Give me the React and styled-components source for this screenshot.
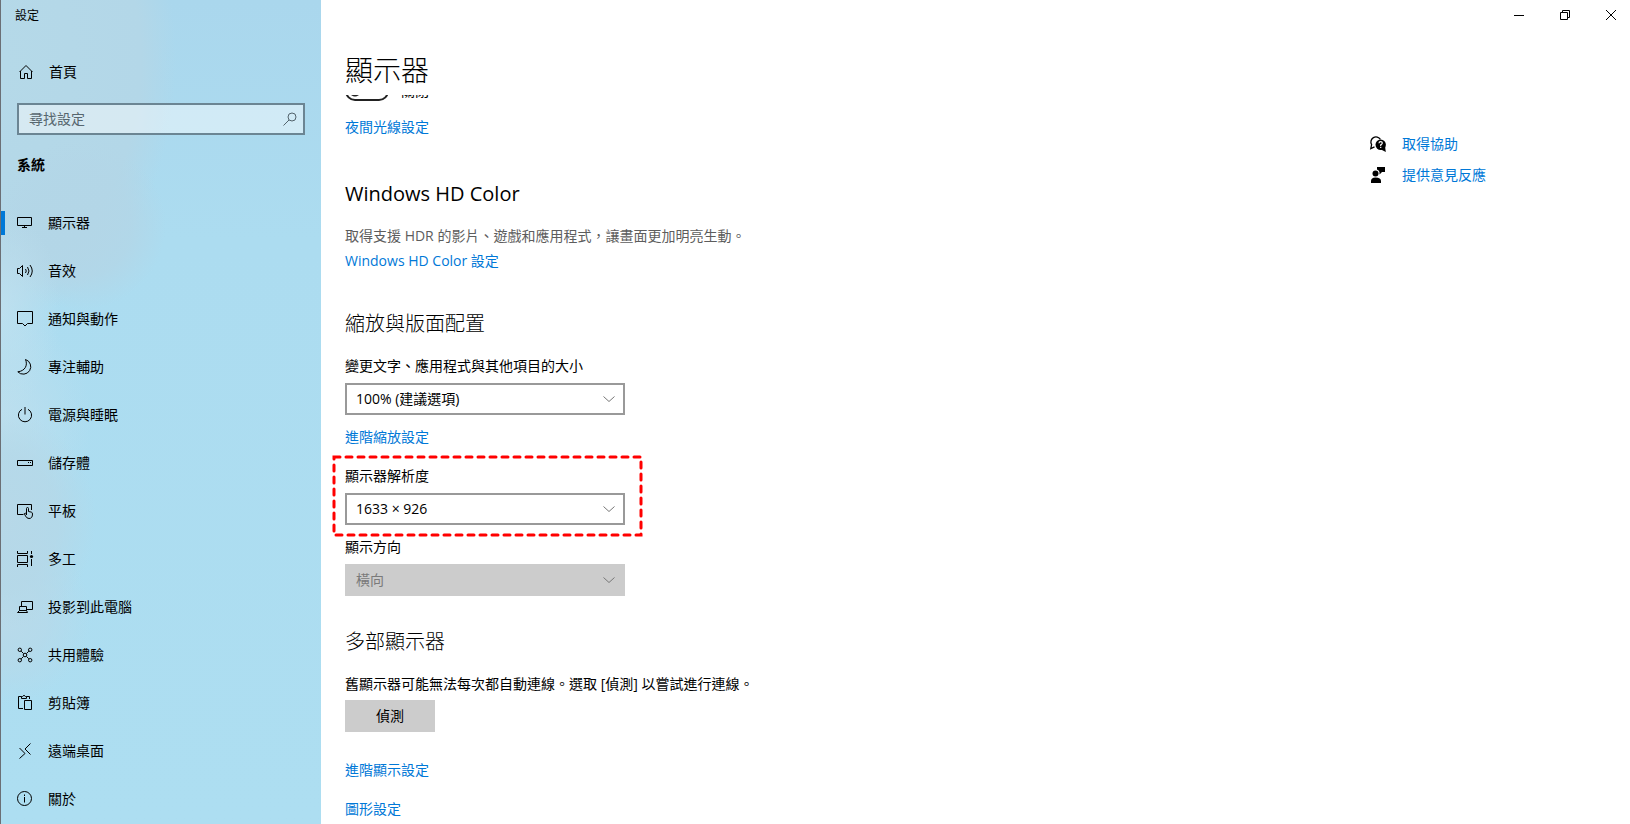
import React from "react";
import styled, { createGlobalStyle } from "styled-components";

const navList = [
  { id: "display", name: "顯示器" },
  { id: "sound", name: "音效" },
  { id: "notice", name: "通知與動作" },
  { id: "focus", name: "專注輔助" },
  { id: "power", name: "電源與睡眠" },
  { id: "storage", name: "儲存體" },
  { id: "tablet", name: "平板" },
  { id: "multitask", name: "多工" },
  { id: "project", name: "投影到此電腦" },
  { id: "share", name: "共用體驗" },
  { id: "clipboard", name: "剪貼簿" },
  { id: "remote", name: "遠端桌面" },
  { id: "about", name: "關於" },
];

const shapes = {
  home: (
    <path d="M1.5 8 L8 1.5 L14.5 8 M2.5 7 V14.5 H6.5 V9.5 H9.5 V14.5 H13.5 V7" />
  ),
  display: <path d="M.5 2.5 H14.5 V10.5 H.5 Z M7.5 10.5 V12.5 M5 12.5 H10" />,
  sound: (
    <path d="M.5 5.5 H2.5 L5.5 2.5 V13.5 L2.5 10.5 H.5 Z M8.5 6 Q10 8 8.5 10 M10.5 4 Q13.5 8 10.5 12 M13 2 Q17.5 8 13 14" />
  ),
  notice: <path d="M.5 .5 H15.5 V12.5 H10.5 L8 15 L5.5 12.5 H.5 Z" />,
  focus: (
    <path d="M8.5 .5 A7.5 7.5 0 1 1 .8 12.8 C8 12 11 6.5 8.5 .5 Z" />
  ),
  power: <path d="M8 0 V7.5 M5 2.3 A6.6 6.6 0 1 0 11 2.3" />,
  storage: <path d="M.5 5.5 H15.5 V10.5 H.5 Z M11 7.5 H12 M13 7.5 H14" />,
  tablet: (
    <path d="M6.5 11.5 H.5 V1.5 H14.5 V7 M9.5 12 V5.5 A1 1 0 0 1 11.5 5.5 V8.5 L14.3 9.1 Q15.5 9.4 15.5 11 Q15.5 15.5 12 15.5 Q9.8 15.5 8.5 13 L7.3 10.6 Q8.3 9.6 9.5 11" />
  ),
  multitask: (
    <g>
      <path d="M.5 0 V2.5 H10.5 V0 M.5 4.5 H10.5 V11.5 H.5 Z M.5 16 V13.5 H10.5 V16 M14.5 0 V3 M14.5 8 V15" />
      <circle cx="14.5" cy="5.5" r="1.6" fill="currentColor" stroke="none" />
    </g>
  ),
  project: (
    <path d="M4.5 7 V2.5 H15.5 V10.5 H10 M2.5 7.5 H9.5 V11.5 H2.5 Z M.5 13.5 H10.5 L9.5 11.5 H2.5 Z" />
  ),
  share: (
    <g>
      <path d="M4.2 4.2 L6.5 6.5 M11.8 4.2 L9.5 6.5 M4.2 11.8 L6.5 9.5 M11.8 11.8 L9.5 9.5" />
      <circle cx="8" cy="8" r="1.8" />
      <circle cx="2.8" cy="2.8" r="1.7" />
      <circle cx="13.2" cy="2.8" r="1.7" />
      <circle cx="2.8" cy="13.2" r="1.7" />
      <circle cx="13.2" cy="13.2" r="1.7" />
    </g>
  ),
  clipboard: (
    <path d="M6 13.5 H1.5 V1.5 H4.5 M9.5 1.5 H12.5 V4 M4.5 3.5 V1.5 H5.5 Q7 -1 8.5 1.5 H9.5 V3.5 Z M7.5 5.5 H14.5 V14.5 H7.5 Z" />
  ),
  remote: <path d="M13.5 .5 L8 6 L13.5 11.5 M2.5 5 L8 10.5 L2.5 15.5" />,
  about: (
    <g>
      <circle cx="7.5" cy="7.5" r="7" />
      <path d="M7.5 6 V11.5 M7.5 3.5 V5" />
    </g>
  ),
  search: (
    <g>
      <circle cx="10" cy="6" r="4" />
      <path d="M7 9 L1.5 14.5" />
    </g>
  ),
};

const Icon = ({ name }) => (
  <IconSvg viewBox="0 0 16 16" aria-hidden="true">
    {shapes[name]}
  </IconSvg>
);

const HelpIcon = () => (
  <SolidSvg viewBox="0 0 16 16" aria-hidden="true">
    <path
      d="M4.5 10.8 L.8 12.5 L1.6 8.6 A5 5 0 1 1 10.4 3.4"
      fill="none"
      stroke="currentColor"
      strokeWidth="1.3"
    />
    <circle cx="10.7" cy="8.7" r="5.2" />
    <path d="M11 13.5 L15.8 16 L15 10 Z" />
    <path
      d="M9 7.3 Q9 5.7 10.7 5.7 Q12.3 5.7 12.3 7.1 Q12.3 8.1 10.7 8.9 V9.9 M10.7 10.8 V12"
      fill="none"
      stroke="#fff"
      strokeWidth="1.2"
    />
  </SolidSvg>
);

const FeedbackIcon = () => (
  <SolidSvg viewBox="0 0 16 16" aria-hidden="true">
    <circle cx="5.5" cy="6.5" r="3" />
    <path d="M1 16 V14 Q1 10.5 5.5 10.5 Q11 10.5 11 14 V16 Z" />
    <path d="M7 0 H15 V5 H12 L9.5 7.5 V5 Q9 3 7 2.5 Z" />
  </SolidSvg>
);

const SelectBox = ({ id, label, value, disabled }) => {
  return (
    <React.Fragment>
      <Label htmlFor={id}>{label}</Label>
      <SelectWrap>
        <Select id={id} defaultValue={value} disabled={disabled}>
          <option value={value}>{value}</option>
        </Select>
        <Arrow viewBox="0 0 12 6" aria-hidden="true">
          <path d="M.5 .5 L6 5.5 L11.5 .5" />
        </Arrow>
      </SelectWrap>
    </React.Fragment>
  );
};

const App = () => {
  const [current, setCurrent] = React.useState("display");

  return (
    <React.Fragment>
      <GlobalStyle />
      <Window>
        <Sidebar>
          <AppName>設定</AppName>
          <Home href="#home">
            <Icon name="home" />
            首頁
          </Home>
          <SearchBox>
            <SearchInput aria-label="尋找設定" placeholder="尋找設定" />
            <Icon name="search" />
          </SearchBox>
          <Category>系統</Category>
          <nav>
            {navList.map((v) => {
              return (
                <NavItem
                  key={v.id}
                  href={"#" + v.id}
                  $active={v.id === current}
                  onClick={() => setCurrent(v.id)}
                >
                  <Icon name={v.id} />
                  {v.name}
                </NavItem>
              );
            })}
          </nav>
        </Sidebar>

        <Main>
          <Controls>
            <ControlButton aria-label="最小化">
              <ControlSvg viewBox="0 0 10 10">
                <path d="M0 5.5 H10" />
              </ControlSvg>
            </ControlButton>
            <ControlButton aria-label="還原">
              <ControlSvg viewBox="0 0 10 10">
                <path d="M.5 2.5 H7.5 V9.5 H.5 Z M2.5 2.5 V.5 H9.5 V7.5 H7.5" />
              </ControlSvg>
            </ControlButton>
            <ControlButton aria-label="關閉視窗">
              <ControlSvg viewBox="0 0 10 10">
                <path d="M0 0 L10 10 M10 0 L0 10" />
              </ControlSvg>
            </ControlButton>
          </Controls>
          <Title>顯示器</Title>
          <Body>
            <Content>
              <Section $gap={43}>
                <ToggleRow>
                  <Toggle type="checkbox" role="switch" />
                  關閉
                </ToggleRow>
                <Link href="#night">夜間光線設定</Link>
              </Section>

              <Section $gap={39}>
                <SubTitle>Windows HD Color</SubTitle>
                <Text $sub>
                  取得支援 HDR 的影片、遊戲和應用程式，讓畫面更加明亮生動。
                </Text>
                <Link href="#hdcolor">Windows HD Color 設定</Link>
              </Section>

              <Section $gap={32}>
                <SubTitle $light>縮放與版面配置</SubTitle>
                <Field>
                  <SelectBox
                    id="scale"
                    label="變更文字、應用程式與其他項目的大小"
                    value="100% (建議選項)"
                  />
                </Field>
                <LinkRow>
                  <Link href="#scaling">進階縮放設定</Link>
                </LinkRow>
                <Field>
                  <SelectBox
                    id="resolution"
                    label="顯示器解析度"
                    value="1633 × 926"
                  />
                  <Marker aria-hidden="true">
                    <rect x="1" y="1" width="100%" height="100%" />
                  </Marker>
                </Field>
                <Field>
                  <SelectBox
                    id="direction"
                    label="顯示方向"
                    value="橫向"
                    disabled
                  />
                </Field>
              </Section>

              <Section $gap={0}>
                <SubTitle $light>多部顯示器</SubTitle>
                <Text>
                  舊顯示器可能無法每次都自動連線。選取 [偵測] 以嘗試進行連線。
                </Text>
                <DetectButton>偵測</DetectButton>
                <LinkList>
                  <Link href="#advanced">進階顯示設定</Link>
                  <Link href="#graphics">圖形設定</Link>
                </LinkList>
              </Section>
            </Content>
            <Aside>
              <HelpLink href="#help">
                <HelpIcon />
                取得協助
              </HelpLink>
              <HelpLink href="#feedback">
                <FeedbackIcon />
                提供意見反應
              </HelpLink>
            </Aside>
          </Body>
        </Main>
      </Window>
    </React.Fragment>
  );
};

const GlobalStyle = createGlobalStyle`
  * {
    box-sizing: border-box;
  }
  body {
    margin: 0;
    overflow: hidden;
    background: #fff;
  }
  body, button, input, select {
    font-family: "Open Sans", "Noto Sans CJK TC", sans-serif;
    font-size: 14px;
    line-height: 20px;
    color: #000;
  }
`;

const Window = styled.div`
  display: grid;
  grid-template-columns: 321px minmax(0, 1fr);
  height: 100vh;
`;

const Sidebar = styled.aside`
  overflow: hidden;
  border-left: 1px solid #6b6f75;
  background:
    radial-gradient(ellipse 60px 100px at 0 310px, rgba(193, 225, 239, 0.8) 0, rgba(193, 225, 239, 0) 100%),
    radial-gradient(circle 85px at 80px 225px, #b3d6e7 0, rgba(179, 214, 231, 0.8) 60%, rgba(179, 214, 231, 0) 100%),
    radial-gradient(ellipse 175px 260px at 0 60px, #b5d9e8 0, #b3d7e8 80%, rgba(176, 216, 234, 0) 100%),
    radial-gradient(ellipse 95px 110px at 0 520px, #b7d8e8 0, rgba(181, 216, 232, 0.8) 60%, rgba(181, 218, 235, 0) 100%),
    radial-gradient(ellipse 90px 110px at 0 420px, #bddfee 0, rgba(188, 221, 237, 0) 100%),
    radial-gradient(circle 90px at 0 615px, #b9daea 0, rgba(184, 217, 233, 0.7) 50%, rgba(181, 218, 235, 0) 100%),
    linear-gradient(#aad7ed 0, #acdcf0 240px, #addef1 100%);
`;

const AppName = styled.div`
  padding: 6px 14px 0;
  font-size: 12px;
`;

const Home = styled.a`
  display: flex;
  align-items: center;
  gap: 15px;
  height: 48px;
  margin-top: 22px;
  padding: 0 17px;
  color: #000;
  text-decoration: none;
`;

const IconSvg = styled.svg`
  flex: none;
  width: 16px;
  height: 16px;
  overflow: visible;
  fill: none;
  stroke: currentColor;
`;

const SearchBox = styled.div`
  display: flex;
  align-items: center;
  height: 32px;
  margin: 7px 16px 0;
  padding: 0 5px 0 10px;
  border: 2px solid #6b8593;
  background: rgba(255, 255, 255, 0.45);
  color: #53636c;
`;

const SearchInput = styled.input`
  flex: 1;
  min-width: 0;
  padding: 0;
  border: 0;
  outline: 0;
  background: transparent;

  &::placeholder {
    color: #56666f;
    opacity: 1;
  }
`;

const Category = styled.div`
  margin: 20px 16px 24px;
  font-weight: 700;
`;

const NavItem = styled.a`
  display: flex;
  align-items: center;
  gap: 15px;
  height: 48px;
  padding-right: 16px;
  color: #000;
  text-decoration: none;

  &::before {
    content: "";
    width: 4px;
    height: 24px;
    margin-right: -3px;
    background: ${(props) => (props.$active ? "#0078d7" : "transparent")};
  }
`;

const Main = styled.main`
  display: flex;
  flex-direction: column;
  min-width: 0;
  min-height: 0;
  background: #fff;
`;

const Controls = styled.div`
  display: flex;
  justify-content: flex-end;
  gap: 8px;
`;

const ControlButton = styled.button`
  display: flex;
  align-items: center;
  justify-content: center;
  width: 38px;
  height: 30px;
  padding: 0;
  border: 0;
  background: transparent;
`;

const ControlSvg = styled.svg`
  width: 10px;
  height: 10px;
  fill: none;
  stroke: #000;
`;

const Title = styled.h1`
  margin: 20px 24px 5px;
  font-size: 28px;
  font-weight: 300;
  line-height: 40px;
`;

const Body = styled.div`
  display: grid;
  grid-template-columns: minmax(0, 1fr) 260px;
  flex: 1;
  min-height: 0;
  overflow: hidden;
`;

/* the list is scrolled a little, so the switch is half under the title */
const Content = styled.div`
  margin-top: -14px;
  padding-left: 24px;
`;

const Section = styled.section`
  display: flex;
  flex-direction: column;
  align-items: flex-start;
  margin-bottom: ${(props) => props.$gap}px;
`;

const ToggleRow = styled.label`
  display: flex;
  align-items: center;
  gap: 12px;
  margin-bottom: 16px;
`;

const Toggle = styled.input`
  appearance: none;
  width: 44px;
  height: 20px;
  margin: 0;
  border: 2px solid #222;
  border-radius: 10px;
  background: radial-gradient(circle at 8px 8px, #222 5px, transparent 6px);
`;

const Link = styled.a`
  color: #0078d7;
  text-decoration: none;
`;

const SubTitle = styled.h2`
  margin: 0 0 18px;
  font-size: 20px;
  font-weight: ${(props) => (props.$light ? 300 : 400)};
  line-height: 28px;
`;

const Text = styled.p`
  margin: 0 0 5px;
  color: ${(props) => (props.$sub ? "#5d5d5d" : "#000")};
`;

const Field = styled.div`
  position: relative;
  width: 280px;

  & + & {
    margin-top: 12px;
  }
`;

const Label = styled.label`
  display: block;
  margin-bottom: 7px;
`;

const SelectWrap = styled.div`
  display: grid;
  align-items: center;
`;

const Select = styled.select`
  appearance: none;
  grid-area: 1 / 1;
  width: 100%;
  height: 32px;
  padding: 0 30px 0 9px;
  border: 2px solid #999;
  border-radius: 0;
  background: #fff;

  &:disabled {
    border-color: #ccc;
    background: #ccc;
    color: #7a7a7a;
    opacity: 1;
  }
`;

const Arrow = styled.svg`
  grid-area: 1 / 1;
  justify-self: end;
  width: 12px;
  height: 6px;
  margin-right: 10px;
  fill: none;
  stroke: #777;
  pointer-events: none;
`;

const LinkRow = styled.div`
  margin: 12px 0 19px;
`;

const Marker = styled.svg`
  position: absolute;
  top: -10px;
  left: -12px;
  width: 307px;
  height: 78px;
  overflow: visible;
  pointer-events: none;

  rect {
    fill: none;
    stroke: #f00;
    stroke-width: 3px;
    stroke-linecap: round;
    stroke-dasharray: 6 6;
  }
`;

const DetectButton = styled.button`
  width: 90px;
  height: 32px;
  margin-top: 1px;
  padding: 0;
  border: 0;
  background: #ccc;
`;

const LinkList = styled.div`
  display: flex;
  flex-direction: column;
  gap: 19px;
  margin-top: 28px;
`;

const Aside = styled.aside`
  display: flex;
  flex-direction: column;
  gap: 11px;
  padding-top: 39px;
`;

const HelpLink = styled.a`
  display: flex;
  align-items: center;
  gap: 16px;
  color: #0078d7;
  text-decoration: none;
`;

const SolidSvg = styled.svg`
  flex: none;
  width: 16px;
  height: 16px;
  overflow: visible;
  color: #000;
  fill: currentColor;
`;

export default App;
